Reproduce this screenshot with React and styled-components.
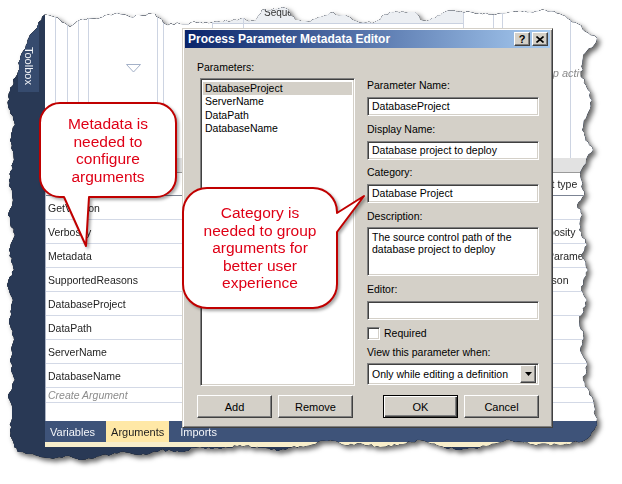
import React from 'react';
import styled, { createGlobalStyle, css } from 'styled-components';

const ui = `"Liberation Sans", Arial, sans-serif`;

const GlobalStyle = createGlobalStyle`
  html, body {
    margin: 0;
    padding: 0;
    background: #fff;
  }
  body {
    width: 622px;
    height: 484px;
    overflow: hidden;
    font-family: ${ui};
  }
`;

// torn paper edge, page coordinates, clockwise from top-left
const EDGE = [
  [42, 17], [48, 15], [60, 20], [70, 27], [80, 20], [100, 18], [117, 13], [130, 17], [155, 14],
  [165, 24], [180, 24], [200, 22], [220, 22], [240, 19], [255, 21], [262, 10], [285, 8], [295, 20],
  [310, 22], [330, 13], [345, 15], [360, 23], [375, 22], [390, 12], [415, 12], [420, 20], [430, 20],
  [445, 12], [470, 12], [495, 15], [510, 12], [530, 12], [545, 10], [560, 14], [570, 20],
  [578, 24], [588, 33], [597, 38], [594, 45], [583, 55], [581, 75], [588, 90], [592, 100], [587, 115],
  [582, 130], [589, 145], [593, 150], [586, 160], [580, 175], [584, 195], [577, 205], [582, 215],
  [579, 230], [587, 245], [581, 255], [588, 270], [581, 290], [587, 300], [579, 320], [583, 335],
  [580, 350], [587, 365], [583, 380], [593, 400], [597, 425],
  [594, 430], [585, 440], [560, 445], [530, 444], [510, 440], [480, 447], [460, 450], [440, 446],
  [420, 440], [400, 444], [380, 447], [360, 443], [345, 445], [330, 440], [300, 446], [280, 450],
  [260, 448], [240, 445], [220, 449], [200, 447], [180, 452], [160, 450], [140, 455], [120, 452],
  [100, 456], [80, 460], [65, 456], [50, 458], [35, 455], [20, 452],
  [14, 447], [10, 430], [12, 410], [8, 395], [15, 380], [10, 360], [14, 340], [9, 320], [13, 300],
  [7, 285], [14, 270], [9, 250], [15, 235], [8, 215], [13, 200], [9, 180], [14, 160], [10, 140],
  [15, 125], [8, 105], [10, 88], [17, 75], [20, 60], [26, 45], [30, 35], [38, 25],
];

const tornClip = (pts, ox, oy) => {
  let seed = 11;
  const rnd = () => {
    seed = (seed * 16807) % 2147483647;
    return seed / 2147483647;
  };
  const out = [];
  pts.forEach(([x1, y1], i) => {
    const [x2, y2] = pts[(i + 1) % pts.length];
    const dx = x2 - x1;
    const dy = y2 - y1;
    const len = Math.hypot(dx, dy) || 1;
    const n = Math.max(1, Math.round(len / 3));
    for (let k = 0; k < n; k++) {
      const t = k / n;
      const j = k === 0 ? 0 : (rnd() - 0.5) * 2.6;
      const x = x1 + dx * t - (dy / len) * j - ox;
      const y = y1 + dy * t + (dx / len) * j - oy;
      out.push(`${x.toFixed(1)}px ${y.toFixed(1)}px`);
    }
  });
  return `polygon(${out.join(',')})`;
};

const CLIP = tornClip(EDGE, 4, 4);

const Page = styled.div`
  position: relative;
  width: 622px;
  height: 484px;
  padding: 4px;
  box-sizing: border-box;
  background: #fff;
  overflow: hidden;
`;

const ShotFrame = styled.div`
  width: 600px;
  height: 464px;
  filter: drop-shadow(0 0 0.6px rgba(0, 0, 0, 0.95)) drop-shadow(3px 3px 2.5px rgba(0, 0, 0, 0.6));
`;

const ShotClip = styled.div`
  width: 100%;
  height: 100%;
  display: grid;
  grid-template-columns: 41px 1fr;
  background: #293955;
  clip-path: ${p => p.$clip};
`;

const ToolboxRail = styled.div`
  padding: 19px 0 0 14px;
  background: #293955;
`;

const ToolboxTab = styled.div`
  width: 21px;
  height: 69px;
  box-sizing: border-box;
  padding-top: 24px;
  display: flex;
  justify-content: center;
  background: #364b6e;
`;

const ToolboxLabel = styled.span`
  writing-mode: vertical-rl;
  font: 11px ${ui};
  color: #f2f4f8;
`;

const MainCol = styled.div`
  min-width: 0;
  display: flex;
  flex-direction: column;
  padding-bottom: 21px;
  background: #293955;
`;

const Designer = styled.div`
  position: relative;
  flex: none;
  height: 154px;
  background: #fff;
  overflow: hidden;
`;

const DesignerArt = styled.svg`
  position: absolute;
  left: 0;
  top: 0;
`;

const CanvasLabel = styled.span`
  position: absolute;
  left: ${p => p.$x}px;
  top: ${p => p.$y}px;
  font: ${p => (p.$italic ? 'italic ' : '')}${p => p.$size || 11}px ${ui};
  color: ${p => p.$color || '#333'};
  white-space: nowrap;
`;

const ScrollBand = styled.div`
  flex: none;
  height: 14px;
  background: #e2e2e2;
  border-bottom: 1px solid #9a9a9a;
`;

const ArgGrid = styled.div`
  flex: 1;
  display: flex;
  flex-direction: column;
  background: #fff;
  border-left: 1px solid #aeb6c6;
  font: 10.5px ${ui};
  color: #1e1e1e;
  overflow: hidden;
`;

const GridRow = styled.div`
  flex: none;
  display: grid;
  grid-template-columns: 155px 306px 1fr;
  align-items: center;
  height: ${p => (p.$header ? 22 : 23)}px;
  border-bottom: 1px solid ${p => (p.$header ? '#7c8494' : '#d3d9e6')};
  white-space: nowrap;
  overflow: hidden;
`;

const Cell = styled.span`
  padding-left: 2px;
  overflow: hidden;
`;

const CreateRow = styled.div`
  flex: none;
  height: 14px;
  line-height: 14px;
  padding-left: 2px;
  border-bottom: 1px solid #d3d9e6;
  font-style: italic;
  color: #8c8c8c;
`;

const GridFill = styled.div`
  flex: 1;
`;

const TabBar = styled.div`
  flex: none;
  height: 21px;
  display: flex;
  gap: 6px;
  background: #3e5379;
  font: 11px ${ui};
`;

const Tab = styled.div`
  display: flex;
  align-items: center;
  padding: 0 5px;
  background: ${p => (p.$active ? '#ffe8a6' : 'transparent')};
  color: ${p => (p.$active ? '#1e1e1e' : '#f4f6fa')};
`;

const CreamStrip = styled.div`
  flex: none;
  height: 5px;
  background: #f8eecb;
`;

/* ---------- dialog ---------- */

const raised = css`
  border: 1px solid;
  border-color: #fff #404040 #404040 #fff;
  box-shadow: inset -1px -1px #808080;
`;

const sunken = css`
  box-sizing: border-box;
  background: #fff;
  border: 1px solid;
  border-color: #808080 #fff #fff #808080;
  box-shadow: inset 1px 1px #404040, inset -1px -1px #d4d0c8;
`;

const Dialog = styled.div`
  position: absolute;
  left: 182px;
  top: 28px;
  width: 371px;
  height: 400px;
  box-sizing: border-box;
  display: flex;
  flex-direction: column;
  padding: 1px 2px 2px;
  background: #d4d0c8;
  border: 1px solid;
  border-color: #d4d0c8 #404040 #404040 #d4d0c8;
  box-shadow: inset 1px 1px #fff, inset -1px -1px #808080;
  font: 10.5px ${ui};
  color: #000;
`;

const TitleBar = styled.div`
  flex: none;
  height: 18px;
  display: flex;
  align-items: center;
  padding: 0 2px 0 3px;
  background: linear-gradient(to right, #0a246a, #a6caf0);
`;

const TitleText = styled.span`
  flex: 1;
  font: bold 12px ${ui};
  color: #fff;
  white-space: nowrap;
`;

const CaptionButtons = styled.div`
  display: flex;
  gap: 2px;
`;

const CaptionBtn = styled.div`
  width: 16px;
  height: 14px;
  box-sizing: border-box;
  display: flex;
  align-items: center;
  justify-content: center;
  background: #d4d0c8;
  ${raised};
  font: bold 11px ${ui};
  color: #000;
`;

const DialogBody = styled.div`
  flex: 1;
  display: grid;
  grid-template-columns: 158px 172px;
  column-gap: 12px;
  padding: 0 11px 7px 12px;
`;

const Column = styled.div`
  display: flex;
  flex-direction: column;
  padding-top: ${p => p.$top || 0}px;
`;

const FieldLabel = styled.div`
  height: 13px;
  line-height: 13px;
  margin-top: ${p => p.$mt || 0}px;
  white-space: nowrap;
`;

const TextBox = styled.div`
  ${sunken};
  height: ${p => p.$h || 19}px;
  margin-top: ${p => p.$mt ?? 5}px;
  padding: ${p => (p.$multi ? '3px 4px' : '0 4px')};
  line-height: ${p => (p.$multi ? '12px' : '17px')};
  white-space: ${p => (p.$multi ? 'normal' : 'nowrap')};
`;

const ListBox = styled.div`
  ${sunken};
  flex: 1;
  margin: 4px 0 0 3px;
  padding: 3px 2px 2px;
`;

const ListItem = styled.div`
  height: 13.4px;
  line-height: 13.4px;
  padding-left: 2px;
  background: ${p => (p.$selected ? '#d4d0c8' : 'transparent')};
`;

const ButtonRow = styled.div`
  display: flex;
  justify-content: ${p => (p.$end ? 'flex-end' : 'flex-start')};
  gap: 6px;
  margin-top: auto;
  padding-top: 9px;
`;

const Button = styled.div`
  width: 75px;
  height: 23px;
  box-sizing: border-box;
  display: flex;
  align-items: center;
  justify-content: center;
  background: #d4d0c8;
  ${raised};
  font: 11px ${ui};
  ${p => p.$default && css`
    border-color: #000;
    box-shadow: inset 1px 1px #fff, inset -1px -1px #404040, inset -2px -2px #808080;
  `}
`;

const CheckRow = styled.div`
  display: flex;
  align-items: center;
  gap: 4px;
  height: 14px;
  margin-top: 6px;
`;

const CheckBox = styled.div`
  ${sunken};
  width: 13px;
  height: 13px;
`;

const Select = styled.div`
  ${sunken};
  height: 22px;
  margin-top: 4px;
  display: flex;
  align-items: center;
  padding: 2px 2px 2px 4px;
`;

const SelectText = styled.span`
  flex: 1;
  white-space: nowrap;
`;

const DropButton = styled.div`
  width: 16px;
  height: 18px;
  box-sizing: border-box;
  display: flex;
  align-items: center;
  justify-content: center;
  background: #d4d0c8;
  ${raised};
`;

/* ---------- callouts ---------- */

const Callout = styled.div`
  position: absolute;
  left: ${p => p.$x}px;
  top: ${p => p.$y}px;
  width: ${p => p.$w}px;
  height: ${p => p.$h}px;
`;

const BubbleShape = styled.svg`
  position: absolute;
  left: 0;
  top: 0;
  overflow: visible;
  filter: drop-shadow(2px 2px 1.5px rgba(0, 0, 0, 0.35));
`;

const BubbleText = styled.div`
  position: relative;
  height: 100%;
  display: flex;
  align-items: center;
  justify-content: center;
  text-align: center;
  font: 15.5px/17.5px ${ui};
  color: #df0016;
`;

const bubblePath = (w, h, r, tail) => {
  const top = `M${r},0 H${w - r} A${r},${r} 0 0 1 ${w},${r}`;
  const rightSide = tail.side === 'right'
    ? `V${tail.a} L${tail.tip[0]},${tail.tip[1]} L${w},${tail.b} V${h - r}`
    : `V${h - r}`;
  const br = `A${r},${r} 0 0 1 ${w - r},${h}`;
  const bottom = tail.side === 'bottom'
    ? `H${tail.b} L${tail.tip[0]},${tail.tip[1]} L${tail.a},${h} H${r}`
    : `H${r}`;
  const rest = `A${r},${r} 0 0 1 0,${h - r} V${r} A${r},${r} 0 0 1 ${r},0 Z`;
  return `${top} ${rightSide} ${br} ${bottom} ${rest}`;
};

const Bubble = ({ x, y, w, h, r, tail, children }) => (
  <Callout $x={x} $y={y} $w={w} $h={h}>
    <BubbleShape width={w} height={h}>
      <path d={bubblePath(w, h, r, tail)} fill="#fff" stroke="#c00000" strokeWidth="2" strokeLinejoin="round" />
    </BubbleShape>
    <BubbleText>{children}</BubbleText>
  </Callout>
);

const ARGS = [
  ['GetVersion', 'In', 'String'],
  ['Verbosity', 'In', 'BuildVerbosity'],
  ['Metadata', 'Property', 'ProcessParameterMetadataCollection'],
  ['SupportedReasons', 'Property', 'BuildReason'],
  ['DatabaseProject', 'In', 'String'],
  ['DataPath', 'In', 'String'],
  ['ServerName', 'In', 'String'],
  ['DatabaseName', 'In', 'String'],
];

const PARAMS = ['DatabaseProject', 'ServerName', 'DataPath', 'DatabaseName'];

const GUIDES = [10, 22, 33, 43, 112, 118, 167, 198, 418, 448, 457, 525];

const App = () => (
  <Page>
    <GlobalStyle />
    <ShotFrame>
      <ShotClip $clip={CLIP}>
        <ToolboxRail>
          <ToolboxTab>
            <ToolboxLabel>Toolbox</ToolboxLabel>
          </ToolboxTab>
        </ToolboxRail>
        <MainCol>
          <Designer>
            <DesignerArt width="559" height="154">
              <rect x="167" y="0" width="251" height="19" fill="#eceff3" />
              <line x1="167" y1="19.5" x2="418" y2="19.5" stroke="#c9d1e0" />
              {GUIDES.map(x => (
                <line key={x} x1={x + 0.5} y1="0" x2={x + 0.5} y2="154" stroke="#cdd4e2" />
              ))}
              <polygon points="81.5,60.5 95.5,60.5 88.5,68" fill="#fff" stroke="#a4b1c8" />
            </DesignerArt>
            <CanvasLabel $x={219} $y={3} $size={10}>Sequence</CanvasLabel>
            <CanvasLabel $x={490} $y={63} $italic $color="#8a8a8a">Drop activity here</CanvasLabel>
          </Designer>
          <ScrollBand />
          <ArgGrid>
            <GridRow $header>
              <Cell>Name</Cell>
              <Cell>Direction</Cell>
              <Cell>Argument type</Cell>
            </GridRow>
            {ARGS.map(([name, dir, type]) => (
              <GridRow key={name}>
                <Cell>{name}</Cell>
                <Cell>{dir}</Cell>
                <Cell>{type}</Cell>
              </GridRow>
            ))}
            <CreateRow>Create Argument</CreateRow>
            <GridFill />
          </ArgGrid>
          <TabBar>
            <Tab>Variables</Tab>
            <Tab $active>Arguments</Tab>
            <Tab>Imports</Tab>
          </TabBar>
          <CreamStrip />
        </MainCol>
      </ShotClip>
    </ShotFrame>

    <Dialog>
      <TitleBar>
        <TitleText>Process Parameter Metadata Editor</TitleText>
        <CaptionButtons>
          <CaptionBtn>?</CaptionBtn>
          <CaptionBtn>
            <svg width="8" height="7" viewBox="0 0 8 7">
              <path d="M0.5 0.5L7.5 6.5M7.5 0.5L0.5 6.5" stroke="#000" strokeWidth="1.6" />
            </svg>
          </CaptionBtn>
        </CaptionButtons>
      </TitleBar>
      <DialogBody>
        <Column>
          <FieldLabel $mt={13}>Parameters:</FieldLabel>
          <ListBox>
            {PARAMS.map((p, i) => (
              <ListItem key={p} $selected={i === 0}>{p}</ListItem>
            ))}
          </ListBox>
          <ButtonRow>
            <Button>Add</Button>
            <Button>Remove</Button>
          </ButtonRow>
        </Column>
        <Column $top={31}>
          <FieldLabel>Parameter Name:</FieldLabel>
          <TextBox>DatabaseProject</TextBox>
          <FieldLabel $mt={7}>Display Name:</FieldLabel>
          <TextBox>Database project to deploy</TextBox>
          <FieldLabel $mt={6}>Category:</FieldLabel>
          <TextBox>Database Project</TextBox>
          <FieldLabel $mt={7}>Description:</FieldLabel>
          <TextBox $multi $h={49} $mt={4}>
            The source control path of the database project to deploy
          </TextBox>
          <FieldLabel $mt={7}>Editor:</FieldLabel>
          <TextBox />
          <CheckRow>
            <CheckBox />
            <span>Required</span>
          </CheckRow>
          <FieldLabel $mt={6}>View this parameter when:</FieldLabel>
          <Select>
            <SelectText>Only while editing a definition</SelectText>
            <DropButton>
              <svg width="7" height="4" viewBox="0 0 7 4">
                <polygon points="0,0 7,0 3.5,4" fill="#000" />
              </svg>
            </DropButton>
          </Select>
          <ButtonRow $end>
            <Button $default>OK</Button>
            <Button>Cancel</Button>
          </ButtonRow>
        </Column>
      </DialogBody>
    </Dialog>

    <Bubble x={40} y={103} w={136} h={94} r={20} tail={{ side: 'bottom', a: 24, b: 49, tip: [46, 143] }}>
      Metadata is<br />needed to<br />configure<br />arguments
    </Bubble>
    <Bubble x={183} y={188} w={154} h={120} r={24} tail={{ side: 'right', a: 25, b: 44, tip: [181, 8] }}>
      Category is<br />needed to group<br />arguments for<br />better user<br />experience
    </Bubble>
  </Page>
);

export default App;
